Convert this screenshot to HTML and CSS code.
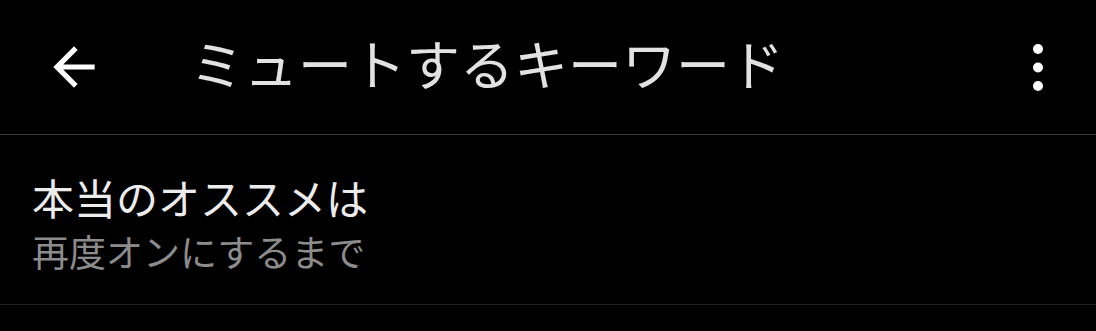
FILE: index.html
```html
<!DOCTYPE html>
<html lang="ja">
<head>
  <meta charset="UTF-8">
  <meta name="viewport" content="width=device-width, initial-scale=1.0">
  <title>ミュートするキーワード</title>
  <link rel="stylesheet" href="styles.css">
</head>
<body>
  <header class="app-bar">
    <button class="back-btn" aria-label="戻る">
      <svg viewBox="0 0 24 24" width="62" height="62">
        <path d="M20 11H7.83l5.59-5.59L12 4l-8 8 8 8 1.41-1.41L7.83 13H20v-2z" fill="#fff"/>
      </svg>
    </button>
    <h1 class="title">ミュートするキーワード</h1>
    <button class="menu-btn" aria-label="メニュー">
      <svg viewBox="0 0 12 48" width="12" height="48">
        <circle cx="6" cy="6" r="5" fill="#fff"/>
        <circle cx="6" cy="24.5" r="5" fill="#fff"/>
        <circle cx="6" cy="43" r="5" fill="#fff"/>
      </svg>
    </button>
  </header>

  <ul class="keyword-list">
    <li class="keyword">
      <div class="keyword-text">本当のオススメは</div>
      <div class="keyword-sub">再度オンにするまで</div>
    </li>
  </ul>
</body>
</html>
```

FILE: styles.css
```css
body {
  margin: 0;
  background: #000;
  font-family: "Noto Sans CJK JP", "Noto Sans", sans-serif;
  color: #e8e8e8;
}

.app-bar {
  display: flex;
  align-items: center;
  height: 134px;
  border-bottom: 1px solid #3a3a3a;
}

.back-btn,
.menu-btn {
  background: none;
  border: none;
  padding: 0;
  display: flex;
  align-items: center;
  justify-content: center;
  cursor: pointer;
}

.back-btn {
  margin-left: 43px;
  width: 62px;
  height: 62px;
}

.title {
  flex: 1;
  margin: 0 0 8px 85px;
  font-size: 54px;
  font-weight: 400;
  line-height: 64px;
  color: #e2e2e2;
}

.menu-btn {
  margin-right: 52px;
}

.keyword-list {
  list-style: none;
  margin: 0;
  padding: 0;
}

.keyword {
  padding: 34px 0 27px 32px;
  border-bottom: 1px solid #232323;
}

.keyword-text {
  font-size: 42px;
  line-height: 56px;
  color: #ececec;
}

.keyword-sub {
  font-size: 37px;
  line-height: 52px;
  color: #8c8c8c;
}
```
